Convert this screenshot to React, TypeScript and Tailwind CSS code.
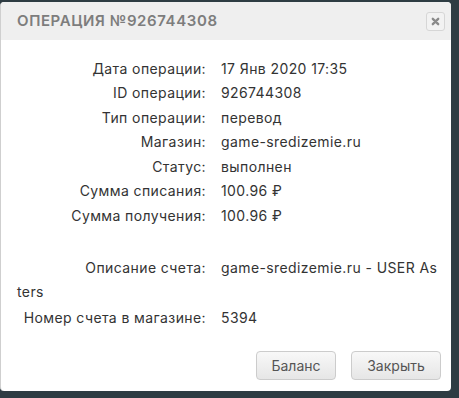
import React from "react";

const rows: [string, string][] = [
  ["Дата операции:", "17 Янв 2020 17:35"],
  ["ID операции:", "926744308"],
  ["Тип операции:", "перевод"],
  ["Магазин:", "game-sredizemie.ru"],
  ["Статус:", "выполнен"],
  ["Сумма списания:", "100.96 ₽"],
  ["Сумма получения:", "100.96 ₽"],
];

export default function App() {
  return (
    <div className="w-[459px] h-[398px] bg-[#2e3c43] pt-[2px] overflow-hidden" style={{ fontFamily: "Inter, 'Noto Sans', sans-serif" }}>
      <div className="w-[451px] h-[389px] bg-white rounded-[4px] border-l border-[#cfcfcf] flex flex-col overflow-hidden">
        <div className="h-[38px] bg-[#efefef] flex items-center justify-between pl-[16px] pr-[6px] shrink-0">
          <div className="text-[15px] font-semibold tracking-[0.6px] text-[#7d7d7d]">ОПЕРАЦИЯ №926744308</div>
          <button className="w-[19px] h-[19px] rounded-[3px] border border-[#d6d6d6] bg-[#f2f2f2] flex items-center justify-center">
            <svg width="9" height="9" viewBox="0 0 10 10">
              <path d="M2 2 L8 8 M8 2 L2 8" stroke="#8a8a8a" strokeWidth="2.6" strokeLinecap="round" />
            </svg>
          </button>
        </div>
        <div className="flex-1 pl-[16px] pr-[10px] pt-[16px] text-[14px] tracking-[0.4px] text-[#333]">
          {rows.map(([l, v]) => (
            <div key={l} className="flex h-[24.5px] items-center">
              <div className="w-[189px] text-right">{l}</div>
              <div className="ml-[15px]">{v}</div>
            </div>
          ))}
          <div className="mt-[28px] leading-[24px] break-all">
            <span className="inline-block w-[189px] text-right break-normal">Описание счета:</span>
            <span className="ml-[15px]">game-sredizemie.ru - USER Asters</span>
          </div>
          <div className="mt-[2px] leading-[24px]">
            <span className="inline-block w-[189px] text-right">Номер счета в магазине:</span>
            <span className="ml-[15px]">5394</span>
          </div>
        </div>
        <div className="flex justify-end gap-[15px] pr-[10px] pb-[11px]">
          <button className="h-[29px] w-[80px] rounded-[4px] border border-[#cccccc] bg-gradient-to-b from-[#f8f8f8] to-[#e6e6e6] text-[14px] text-[#555]">Баланс</button>
          <button className="h-[29px] w-[90px] rounded-[4px] border border-[#cccccc] bg-gradient-to-b from-[#f8f8f8] to-[#e6e6e6] text-[14px] text-[#555]">Закрыть</button>
        </div>
      </div>
    </div>
  );
}
